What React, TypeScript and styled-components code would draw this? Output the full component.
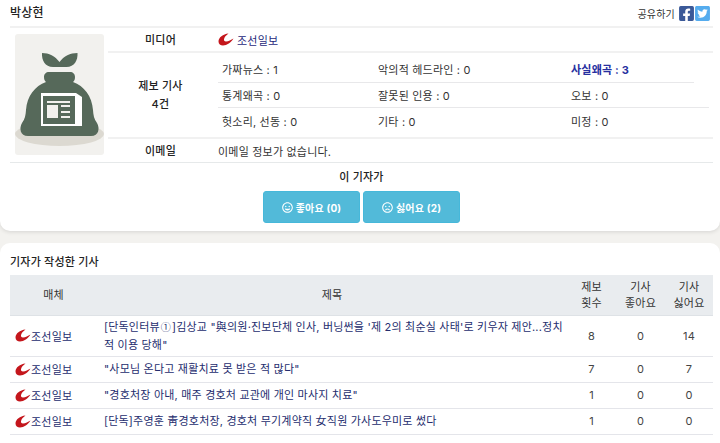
import React from 'react'
import styled, { createGlobalStyle } from 'styled-components'
import { FaFacebookSquare, FaTwitterSquare, FaRegGrin, FaRegFrown } from 'react-icons/fa'

const GlobalStyle = createGlobalStyle`
	html, body {
		margin: 0;
		padding: 0;
		background: #f3f2ef;
		overflow: hidden;
	}

	body {
		font-family: Inter, "Noto Sans CJK KR", sans-serif;
		font-size: 11px;
		letter-spacing: 0.2px;
		color: #333;
	}

	* {
		box-sizing: border-box;
	}
`

const Page = styled.div`
	width: 720px;
	height: 443px;
	overflow: hidden;
`

const ProfileCard = styled.section`
	height: 231px;
	padding: 0 7px 0 10px;
	background: #fff;
	border-radius: 0 0 10px 10px;
	box-shadow: 0 1px 4px rgba(0, 0, 0, 0.12);
`

const TopBar = styled.header`
	display: flex;
	align-items: center;
	justify-content: space-between;
	height: 28px;
	padding-right: 3px;
	border-bottom: 2px solid #f1f1f1;
`

const ReporterName = styled.h1`
	margin: 0 0 3px;
	font-size: 12px;
	font-weight: 500;
	color: #222;
`

const Share = styled.div`
	display: flex;
	align-items: center;
	gap: 1px;
	font-size: 10px;
	color: #333;

	span {
		margin-right: 3px;
	}

	svg {
		width: 15px;
	}
`

const InfoGrid = styled.div`
	display: grid;
	grid-template-columns: 98px 105px 1fr;
	grid-template-rows: 25px 86px 24px;
	height: 135px;
	border-bottom: 1px solid #e6e9ea;
`

const Portrait = styled.div`
	grid-row: 1 / 4;
	padding: 6px 0 0 5px;

	svg {
		display: block;
		border-radius: 3px;
	}
`

const Label = styled.div<{ $last?: boolean }>`
	display: flex;
	align-items: center;
	justify-content: center;
	text-align: center;
	line-height: 18px;
	font-weight: 500;
	color: #222;
	border-bottom: ${(p) => (p.$last ? 'none' : '2px solid #f1f1f1')};
`

const Value = styled.div<{ $link?: boolean; $last?: boolean }>`
	display: flex;
	align-items: center;
	gap: 3px;
	padding-left: 5px;
	color: ${(p) => (p.$link ? '#1f2a7c' : '#333')};
	border-bottom: ${(p) => (p.$last ? 'none' : '2px solid #f1f1f1')};
`

const StatsRows = styled.div`
	display: flex;
	flex-direction: column;
	padding: 4px 0 4px 5px;
	border-bottom: 2px solid #f1f1f1;
`

const StatsRow = styled.div<{ $width: number }>`
	display: grid;
	grid-template-columns: 156px 193px 1fr;
	align-items: center;
	flex: 1;
	width: ${(p) => p.$width}px;
	padding-left: 4px;
	border-bottom: 1px solid #e8e8ea;

	&:last-child {
		border-bottom: none;
	}
`

const Stat = styled.div<{ $active?: boolean }>`
	font-weight: ${(p) => (p.$active ? 700 : 400)};
	color: ${(p) => (p.$active ? '#2730a0' : '#333')};
`

const VoteBox = styled.div`
	display: flex;
	flex-direction: column;
	align-items: center;
	padding-top: 5px;

	h3 {
		margin: 0 0 5px;
		font-size: 11px;
		line-height: 18px;
		font-weight: 500;
		color: #222;
	}
`

const VoteButtons = styled.div`
	display: flex;
	gap: 3px;
`

const VoteButton = styled.button`
	display: flex;
	align-items: center;
	justify-content: center;
	gap: 3px;
	width: 97px;
	height: 32px;
	padding: 0;
	border: 1px solid #46b8da;
	border-radius: 3px;
	background: #52bad9;
	color: #fff;
	font-family: inherit;
	font-size: 10px;
	font-weight: 700;
	letter-spacing: 0.2px;
`

const ArticlesCard = styled.section`
	height: 200px;
	margin-top: 12px;
	padding: 0 7px 0 10px;
	background: #fff;
	border-radius: 10px 10px 0 0;
`

const ArticlesTitle = styled.h2`
	display: flex;
	align-items: center;
	height: 32px;
	margin: 0;
	padding-top: 4px;
	font-size: 11px;
	font-weight: 500;
	color: #222;
`

const ArticleTable = styled.table`
	width: 703px;
	border-collapse: collapse;
	table-layout: fixed;

	th {
		height: 40px;
		padding: 0;
		background: #e9ecef;
		font-size: 11px;
		font-weight: 400;
		line-height: 16px;
		color: #333;
		border-bottom: 1px solid #dee2e6;
	}

	td {
		height: 26px;
		padding: 0;
		text-align: center;
		border-bottom: 1px solid #e4e5ea;
		font-size: 11px;
		color: #444;
	}

	td.media {
		padding-left: 5px;
		text-align: left;
	}

	td.title {
		padding: 2px 1px 2px 7px;
		text-align: left;
		line-height: 18px;
		word-break: break-all;
		color: #252d6e;
	}
`

const MediaLink = styled.span`
	display: flex;
	align-items: center;
	color: #252d6e;
`

const CircledNumber = styled.span`
	display: inline-block;
	margin: 0 1px;
	font-family: "Noto Sans CJK KR", sans-serif;
	font-size: 10px;
	line-height: 12px;
`

const ChosunLogo = () => (
	<svg width='16' height='13' viewBox='0 0 16 13'>
		<path
			d='M10.5 .5C5 1 .5 4.5 .5 8.5c0 2.700 2 4 4.500 4 4 0 8-3 10.500-7C13 7 10.500 8.500 8 8.500c-1.700 0-2.200-1-2-2.200 .3-2 2-4 4.500-5.800z'
			fill='#c4161c'
		/>
	</svg>
)

const MoneyBag = () => (
	<svg width='89' height='121' viewBox='0 0 89 121'>
		<rect width='89' height='121' fill='#f2f1ee' />
		<ellipse cx='44.5' cy='100' rx='44.5' ry='12' fill='#dcd9d1' />
		<path d='M27 19c7 0 13 3 17.500 9 4.500-6 10.500-9 18-9 .5 7-3 14-11 14H38c-8 0-11.500-7-11-14z' fill='#56695a' />
		<path
			d='M34 38h21c3 0 5 2 5 5s-1 4-2 5c11 4 19 14 20 28 .3 5 1 9 4 13 3 5 2 13-6 13H13c-8 0-9-8-6-13 3-4 3.700-8 4-13 1-14 9-24 20-28-1-1-2-2-2-5s2-5 5-5z'
			fill='#56695a'
		/>
		<path d='M26 59h35l6 4v29H26z' fill='#fff' />
		<path d='M28 62h32v28H28z' fill='#56695a' />
		<path d='M32 67h23v2H32zM32 71h11v13H32zM46 71h9v2h-9zM46 77h9v2h-9zM46 82h9v2h-9z' fill='#f2f1ee' />
	</svg>
)

const stats = [
	{
		width: 476,
		items: [
			{ label: '가짜뉴스 : 1' },
			{ label: '악의적 헤드라인 : 0' },
			{ label: '사실왜곡 : 3', active: true },
		],
	},
	{
		width: 491,
		items: [{ label: '통계왜곡 : 0' }, { label: '잘못된 인용 : 0' }, { label: '오보 : 0' }],
	},
	{
		width: 491,
		items: [{ label: '헛소리, 선동 : 0' }, { label: '기타 : 0' }, { label: '미정 : 0' }],
	},
]

const articles = [
	{
		id: 1,
		title: (
			<>
				[단독인터뷰<CircledNumber>①</CircledNumber>]김상교 "與의원·진보단체 인사, 버닝썬을 '제 2의 최순실 사태'로 키우자
				제안...정치적 이용 당해"
			</>
		),
		tips: 8,
		likes: 0,
		dislikes: 14,
	},
	{ id: 2, title: '"사모님 온다고 재활치료 못 받은 적 많다"', tips: 7, likes: 0, dislikes: 7 },
	{ id: 3, title: '"경호처장 아내, 매주 경호처 교관에 개인 마사지 치료"', tips: 1, likes: 0, dislikes: 0 },
	{ id: 4, title: '[단독]주영훈 靑경호처장, 경호처 무기계약직 女직원 가사도우미로 썼다', tips: 1, likes: 0, dislikes: 0 },
]

export default function App() {
	return (
		<Page>
			<GlobalStyle />
			<ProfileCard>
				<TopBar>
					<ReporterName>박상현</ReporterName>
					<Share>
						<span>공유하기</span>
						<FaFacebookSquare size={17} color='#3b5998' />
						<FaTwitterSquare size={17} color='#55acee' />
					</Share>
				</TopBar>

				<InfoGrid>
					<Portrait>
						<MoneyBag />
					</Portrait>
					<Label>미디어</Label>
					<Value $link>
						<ChosunLogo />
						조선일보
					</Value>
					<Label>
						제보 기사
						<br />
						4건
					</Label>
					<StatsRows>
						{stats.map((row) => (
							<StatsRow key={row.items[0].label} $width={row.width}>
								{row.items.map((item) => (
									<Stat key={item.label} $active={item.active}>
										{item.label}
									</Stat>
								))}
							</StatsRow>
						))}
					</StatsRows>
					<Label $last>이메일</Label>
					<Value $last>이메일 정보가 없습니다.</Value>
				</InfoGrid>

				<VoteBox>
					<h3>이 기자가</h3>
					<VoteButtons>
						<VoteButton>
							<FaRegGrin size={11} />
							좋아요 (0)
						</VoteButton>
						<VoteButton>
							<FaRegFrown size={11} />
							싫어요 (2)
						</VoteButton>
					</VoteButtons>
				</VoteBox>
			</ProfileCard>

			<ArticlesCard>
				<ArticlesTitle>기자가 작성한 기사</ArticlesTitle>
				<ArticleTable>
					<colgroup>
						<col width='87' />
						<col width='470' />
						<col width='49' />
						<col width='49' />
						<col width='48' />
					</colgroup>
					<thead>
						<tr>
							<th>매체</th>
							<th>제목</th>
							<th>
								제보
								<br />
								횟수
							</th>
							<th>
								기사
								<br />
								좋아요
							</th>
							<th>
								기사
								<br />
								싫어요
							</th>
						</tr>
					</thead>
					<tbody>
						{articles.map((article) => (
							<tr key={article.id}>
								<td className='media'>
									<MediaLink>
										<ChosunLogo />
										조선일보
									</MediaLink>
								</td>
								<td className='title'>{article.title}</td>
								<td>{article.tips}</td>
								<td>{article.likes}</td>
								<td>{article.dislikes}</td>
							</tr>
						))}
					</tbody>
				</ArticleTable>
			</ArticlesCard>
		</Page>
	)
}
